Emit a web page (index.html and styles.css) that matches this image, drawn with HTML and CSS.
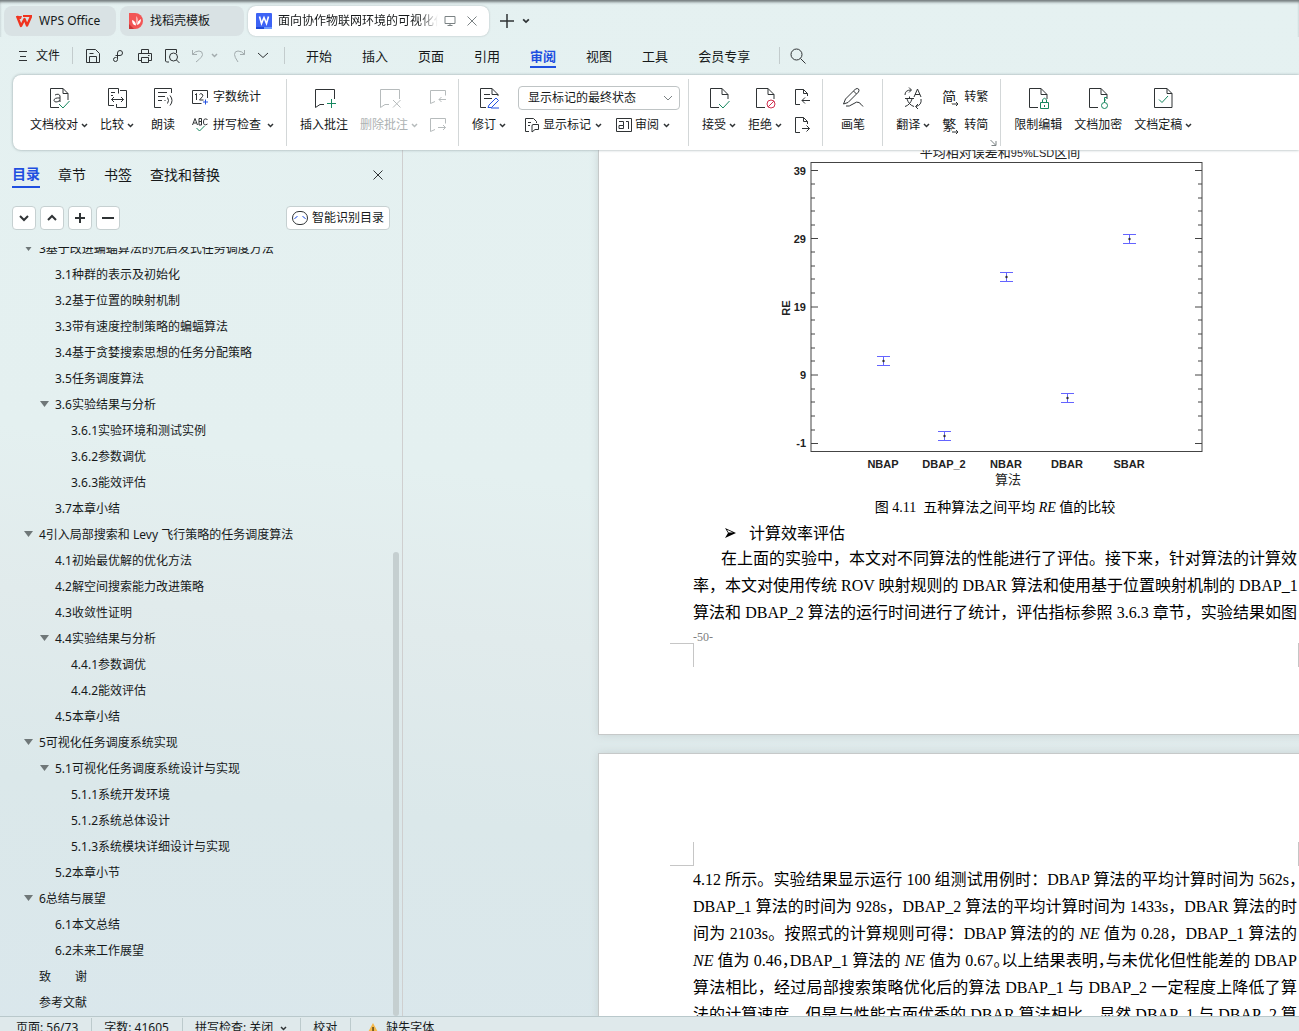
FILE: index.html
```
<!DOCTYPE html>
<html lang="zh-CN">
<head>
    <meta charset="UTF-8">
    <meta name="viewport" content="width=device-width, initial-scale=1.0">
    <title>WPS Office</title>
    <link rel="stylesheet" href="styles.css">
</head>
<body>
    <!-- Shared icon shapes -->
    <svg class="defs" width="0" height="0">
        <symbol id="chev" viewBox="0 0 7 5"><path d="M1 1l2.500 2.500L6 1" stroke-width="1.500"/></symbol>
        <symbol id="page" viewBox="0 0 24 24"><path d="M12 21.500H3.500V2.500H15l6 6V13M15 2.500v6h6"/></symbol>
        <symbol id="bubble" viewBox="0 0 24 24"><path d="M12 18.500H8l-4.500 3V3.500h19V13"/></symbol>
        <symbol id="cross" viewBox="0 0 12 12"><path d="M1.500 1.500l9 9M10.500 1.500l-9 9"/></symbol>
    </svg>

    <header class="titlebar">
        <button class="tab" type="button">
            <svg width="18" height="16" viewBox="0 0 18 16"><path d="M1 3h6l-1 3H3z" fill="#f43a2a"/><path d="M2 3l4 10 3.500-7 2.500 6.500L16 3.500" fill="none" stroke="#f0341f" stroke-width="2.400" stroke-linejoin="round"/><path d="M8 3h9" stroke="#f0341f" stroke-width="2"/></svg>
            <span>WPS Office</span>
        </button>
        <button class="tab tab-store" type="button">
            <svg width="16" height="16" viewBox="0 0 16 16"><path d="M1 0h6a8 8 0 010 16H1z" fill="#f25555"/><path d="M1 11l5 5H1z" fill="#c93636"/><path d="M4 7q4 1 4 5.500Q4 12 4 7zM8.500 12V3q2 3 0 9zM9 12q0-4 4-6 0 5-4 6z" fill="#fff"/></svg>
            <span>找稻壳模板</span>
        </button>
        <div class="tab tab-active">
            <svg width="16" height="16" viewBox="0 0 16 16"><rect width="16" height="16" rx="1" fill="#3d63f5"/><path d="M0 14h8v2H0z" fill="#1d49d8"/><path d="M8 14h8v2H8z" fill="#6e9bff"/><path d="M3.500 3.500l2 7L8 4.500l2.500 6 2-7" fill="none" stroke="#fff" stroke-width="1.600"/></svg>
            <span class="tab-title">面向协作物联网环境的可视化任务</span>
            <svg class="line muted" width="12" height="12" viewBox="0 0 12 12"><path d="M1 1.500h10v7H1zM6 8.500v2M3.500 10.500h5"/></svg>
            <button class="icon-btn tab-close" type="button" aria-label="关闭"><svg class="line muted" width="12" height="12"><use href="#cross"/></svg></button>
        </div>
        <button class="icon-btn" type="button" aria-label="新建"><svg class="line" width="14" height="14" viewBox="0 0 14 14"><path d="M7 0v14M0 7h14" stroke-width="1.500"/></svg></button>
        <button class="icon-btn tab-more" type="button" aria-label="更多标签"><svg class="line" width="8" height="6"><use href="#chev"/></svg></button>
    </header>

    <nav class="menubar">
        <button class="file-btn" type="button">
            <svg class="line" width="10" height="12" viewBox="0 0 10 12"><path d="M1 1.500h8M2 6.500h6M1 10.500h8"/></svg>
            <span>文件</span>
        </button>
        <span class="bar"></span>
        <div class="quick">
            <button class="icon-btn" type="button" aria-label="保存"><svg class="line" width="16" height="16" viewBox="0 0 16 16"><path d="M1.500 1.500h9l4 4v9h-13zM4.500 14V8.500h7V14M4.500 5.500h4"/></svg></button>
            <button class="icon-btn" type="button" aria-label="输出"><svg class="line" width="14" height="14" viewBox="0 0 14 14"><path d="M4.500 8.500h-1a2 2 0 102 2V4a2.500 2.500 0 115 0 2.500 2.500 0 01-2.500 2.500H3.500"/></svg></button>
            <button class="icon-btn" type="button" aria-label="打印"><svg class="line" width="16" height="16" viewBox="0 0 16 16"><path d="M4.500 5V1.500h7V5M4 12.500H1.500v-7h13v7H12M4.500 9.500h7v5h-7zM11 7.500h1.500"/></svg></button>
            <button class="icon-btn" type="button" aria-label="打印预览"><svg class="line" width="16" height="16" viewBox="0 0 16 16"><path d="M5 14H2.500L1.500 13V1.500h11V5M12.500 12l3 3"/><circle cx="9.500" cy="9" r="4"/></svg></button>
            <button class="icon-btn faded" type="button" aria-label="撤销"><svg class="line" width="13" height="14" viewBox="0 0 13 14"><path d="M1.500 1v4.500H6M1.500 5.500Q4 2 8 2a3.500 3.500 0 013.500 3.500Q11.500 8 5 13"/></svg></button>
            <button class="icon-btn faded" type="button" aria-label="撤销列表"><svg class="line" width="7" height="5"><use href="#chev"/></svg></button>
            <button class="icon-btn faded" type="button" aria-label="恢复"><svg class="line" width="13" height="14" viewBox="0 0 13 14"><path d="M11.500 1v4.500H7M11.500 5.500Q9 2 5 2a3.500 3.500 0 00-3.500 3.500Q1.500 8 5 13"/></svg></button>
            <button class="icon-btn" type="button" aria-label="自定义"><svg class="line" width="12" height="7" viewBox="0 0 12 7"><path d="M1 1l5 4.500L11 1"/></svg></button>
        </div>
        <span class="bar"></span>
        <div class="menus">
            <button type="button">开始</button>
            <button type="button">插入</button>
            <button type="button">页面</button>
            <button type="button">引用</button>
            <button type="button" class="current">审阅</button>
            <button type="button">视图</button>
            <button type="button">工具</button>
            <button type="button">会员专享</button>
        </div>
        <span class="bar"></span>
        <button class="icon-btn search" type="button" aria-label="搜索"><svg class="line" width="16" height="16" viewBox="0 0 16 16"><circle cx="6.500" cy="6.500" r="5.500"/><path d="M10.500 10.500l5 5"/></svg></button>
    </nav>

    <section class="ribbon">
        <div class="group">
            <button class="big" type="button">
                <svg class="line" width="24" height="24" viewBox="0 0 24 24"><path d="M12 21.500H3.500V2.500H16l5 5V14M16 2.500v5h5"/><path d="M8 9q4-2 5 1v6M13 12q-6-.5-6 2.500 1 3 6 0" /><path class="green" d="M12 18l4 4 6.500-7" /></svg>
                <span>文档校对<svg class="line" width="7" height="5"><use href="#chev"/></svg></span>
            </button>
            <button class="big" type="button">
                <svg class="line" width="24" height="24" viewBox="0 0 24 24"><path d="M9 19.500H3.500v-17h10v5M6 6.500h4M6 9.500h2M15 4.500h6.500v17h-10V18M6.500 13.500h12M9 11l-2.500 2.500L9 16M16 11l2.500 2.500L16 16"/></svg>
                <span>比较<svg class="line" width="7" height="5"><use href="#chev"/></svg></span>
            </button>
            <button class="big" type="button">
                <svg class="line" width="24" height="24" viewBox="0 0 24 24"><path d="M10 21.500H3.500V2.500h17V7M7 6.500h9M7 10.500h7M7 14.500h4M14 14v1M16.500 11.500q2 3 0 6M19 9.500q4 5 0 10"/></svg>
                <span>朗读</span>
            </button>
            <div class="stack">
                <button class="small" type="button">
                    <svg class="line" width="16" height="16" viewBox="0 0 16 16"><path d="M9.500 14.500H.5v-13h15V9M3 6l1.500-1.500V11M7.500 5.500q1-1.500 2.500-.5t.5 2.500l-3 3.500h4"/><path class="blue" d="M13.500 10.500v5M11 13h5"/></svg>
                    <span>字数统计</span>
                </button>
                <button class="small" type="button">
                    <svg class="line" width="16" height="16" viewBox="0 0 16 16"><path d="M.5 8L3 1.500 5.500 8M1.500 6h3M7 1.500V8h2.500V1.500H7M7 4.500h2.500M15.500 2.500q-4-2-4 2.500t4 2"/><path class="green" d="M4.500 11l3 3 5-5"/></svg>
                    <span>拼写检查</span><svg class="line" width="7" height="5"><use href="#chev"/></svg>
                </button>
            </div>
        </div>
        <div class="group">
            <button class="big" type="button">
                <svg class="line" width="24" height="24"><use href="#bubble"/><path class="green" d="M19.500 13v9M15 17.500h9"/></svg>
                <span>插入批注</span>
            </button>
            <button class="big" type="button" disabled>
                <svg class="line" width="24" height="24"><use href="#bubble"/><path d="M16 14l7.500 7.500M23.500 14L16 21.500"/></svg>
                <span>删除批注<svg class="line" width="7" height="5"><use href="#chev"/></svg></span>
            </button>
            <div class="stack">
                <button class="small" type="button" aria-label="上一条" disabled><svg class="line" width="16" height="16" viewBox="0 0 16 16"><path d="M5 12.500l-4.500 2v-13h15v5M16 10.500H9M11.500 8L9 10.500l2.500 2.500"/></svg></button>
                <button class="small" type="button" aria-label="下一条" disabled><svg class="line" width="16" height="16" viewBox="0 0 16 16"><path d="M5 12.500l-4.500 2v-13h15v5M8 10.500h7.500M13 8l2.500 2.500L13 13"/></svg></button>
            </div>
        </div>
        <div class="group group-tight">
            <button class="big" type="button">
                <svg class="line" width="24" height="24" viewBox="0 0 24 24"><path d="M9 21.500H3.500V2.500H15l6 6V10M15 2.500v6h6M7 8.500h6M7 12.500h8"/><path class="blue" d="M12 19l7-7 2.500 2.500-7 7H11zM14 22h8"/></svg>
                <span>修订<svg class="line" width="7" height="5"><use href="#chev"/></svg></span>
            </button>
            <div class="stack">
                <div class="picker">
                    <select aria-label="标记显示状态"><option>显示标记的最终状态</option></select>
                    <svg class="line muted" width="10" height="7" viewBox="0 0 10 7"><path d="M1 1l4 4 4-4"/></svg>
                </div>
                <div class="pair">
                    <button class="small" type="button">
                        <svg class="line" width="16" height="16" viewBox="0 0 16 16"><path d="M5 14.500H1.500v-13h8l3 3V6M4 5.500h3M4 8.500h2M8 9q0-1.500 1-1.500h5.500v5H11L8 15z"/></svg>
                        <span>显示标记</span><svg class="line" width="7" height="5"><use href="#chev"/></svg>
                    </button>
                    <button class="small" type="button">
                        <svg class="line" width="16" height="16" viewBox="0 0 16 16"><path d="M.5 1.500h15v13H.5zM3 11.500V8.500h4.500V4.500H3M7.500 8.500v3H3M10 4.500h2.500V12"/></svg>
                        <span>审阅</span><svg class="line" width="7" height="5"><use href="#chev"/></svg>
                    </button>
                </div>
            </div>
        </div>
        <div class="group">
            <button class="big" type="button">
                <svg class="line" width="24" height="24"><use href="#page"/><path class="green" d="M12 18l4 4 6.500-7"/></svg>
                <span>接受<svg class="line" width="7" height="5"><use href="#chev"/></svg></span>
            </button>
            <button class="big" type="button">
                <svg class="line" width="24" height="24"><use href="#page"/><g class="red"><circle class="red" cx="18" cy="18" r="4"/><path class="red" d="M15 21l6-6"/></g></svg>
                <span>拒绝<svg class="line" width="7" height="5"><use href="#chev"/></svg></span>
            </button>
            <div class="stack">
                <button class="small" type="button" aria-label="上一处"><svg class="line" width="16" height="16" viewBox="0 0 16 16"><path d="M6 15.500H1.500V.5h8l4 4V7M9.500.5v4h4M16 11.500H8M11 8.500l-3 3 3 3"/></svg></button>
                <button class="small" type="button" aria-label="下一处"><svg class="line" width="16" height="16" viewBox="0 0 16 16"><path d="M6 15.500H1.500V.5h8l4 4V7M9.500.5v4h4M8 11.500h7.500M12.500 8.500l3 3-3 3"/></svg></button>
            </div>
        </div>
        <div class="group">
            <button class="big" type="button">
                <svg class="line" width="24" height="24" viewBox="0 0 24 24"><path d="M2.500 18l2-5L14.500 3q2-1 3 0t0 3L7 16.500zM12.500 5l3 3M5 20q3 1 7-2t6-1.500 4 4"/></svg>
                <span>画笔</span>
            </button>
        </div>
        <div class="group">
            <button class="big" type="button">
                <svg class="line" width="24" height="24" viewBox="0 0 24 24"><path d="M4 9q0-5 6-5M8 1.500L10.500 4 8 6.500M13 11l3.500-8L20 11M14 8.500h5M4 12.500h9M8.500 10.500v2M6 13q2 6 7 7.500M11 13q-2 6-7 7.500M20 13q1 6-5 7.500M17 18l-2.500 2.500L17 23"/></svg>
                <span>翻译<svg class="line" width="7" height="5"><use href="#chev"/></svg></span>
            </button>
            <div class="stack">
                <button class="small" type="button">
                    <span class="glyph">简<svg class="line" width="7" height="6" viewBox="0 0 7 6"><path d="M0 3h6M4 1l2 2-2 2"/></svg></span>
                    <span>转繁</span>
                </button>
                <button class="small" type="button">
                    <span class="glyph">繁<svg class="line" width="7" height="6" viewBox="0 0 7 6"><path d="M0 3h6M4 1l2 2-2 2"/></svg></span>
                    <span>转简</span>
                </button>
            </div>
            <svg class="line muted launcher" width="7" height="7" viewBox="0 0 7 7"><path d="M.5 1l5 5M6 2v4.500H1.500"/></svg>
        </div>
        <div class="group">
            <button class="big" type="button">
                <svg class="line" width="24" height="24"><use href="#page"/><rect x="14" y="15" width="9" height="9" fill="#fff" stroke="none"/><path class="green" d="M14.500 16.500h8v6h-8zM16.500 16v-2q2-3.500 4 0v2M18.500 19v2"/></svg>
                <span>限制编辑</span>
            </button>
            <button class="big" type="button">
                <svg class="line" width="24" height="24"><use href="#page"/><g class="green"><circle cx="18.500" cy="19.500" r="3"/><path d="M18.500 16.500v-5H21M18.500 14H20"/></g></svg>
                <span>文档加密</span>
            </button>
            <button class="big" type="button">
                <svg class="line" width="24" height="24" viewBox="0 0 24 24"><path d="M3.500 2.500H16l5 5v14H3.500zM16 2.500v5h5"/><path class="green" d="M8 13.500l3 3 6-6.500"/></svg>
                <span>文档定稿<svg class="line" width="7" height="5"><use href="#chev"/></svg></span>
            </button>
        </div>
    </section>

    <main class="workspace">
        <aside class="sidebar">
            <div class="side-tabs">
                <button type="button" class="current">目录</button>
                <button type="button">章节</button>
                <button type="button">书签</button>
                <button type="button">查找和替换</button>
                <button class="icon-btn side-close" type="button" aria-label="关闭"><svg class="line" width="12" height="12"><use href="#cross"/></svg></button>
            </div>
            <div class="side-tools">
                <button type="button" aria-label="展开"><svg class="line" width="10" height="10" viewBox="0 0 10 10"><path d="M1 3l4 4 4-4" stroke-width="2"/></svg></button>
                <button type="button" aria-label="收起"><svg class="line" width="10" height="10" viewBox="0 0 10 10"><path d="M1 7l4-4 4 4" stroke-width="2"/></svg></button>
                <button type="button" aria-label="提升"><svg class="line" width="10" height="10" viewBox="0 0 10 10"><path d="M5 0v10M0 5h10" stroke-width="2"/></svg></button>
                <button type="button" aria-label="降低"><svg class="line" width="12" height="10" viewBox="0 0 12 10"><path d="M0 5h12" stroke-width="2"/></svg></button>
                <button type="button" class="smart">
                    <svg class="line" width="16" height="14" viewBox="0 0 16 14"><rect x=".5" y=".5" width="15" height="13" rx="6.500"/><path class="blue" d="M2.500 8q1-2 3-2.500M13.500 8q-1-2-3-2.500"/></svg>
                    <span>智能识别目录</span>
                </button>
            </div>
            <div class="outline">
                <ul>
                    <li class="level-1 open">3基于改进蝙蝠算法的元启发式任务调度方法</li>
                    <li class="level-2">3.1种群的表示及初始化</li>
                    <li class="level-2">3.2基于位置的映射机制</li>
                    <li class="level-2">3.3带有速度控制策略的蝙蝠算法</li>
                    <li class="level-2">3.4基于贪婪搜索思想的任务分配策略</li>
                    <li class="level-2">3.5任务调度算法</li>
                    <li class="level-2 open">3.6实验结果与分析</li>
                    <li class="level-3">3.6.1实验环境和测试实例</li>
                    <li class="level-3">3.6.2参数调优</li>
                    <li class="level-3">3.6.3能效评估</li>
                    <li class="level-2">3.7本章小结</li>
                    <li class="level-1 open">4引入局部搜索和 Levy 飞行策略的任务调度算法</li>
                    <li class="level-2">4.1初始最优解的优化方法</li>
                    <li class="level-2">4.2解空间搜索能力改进策略</li>
                    <li class="level-2">4.3收敛性证明</li>
                    <li class="level-2 open">4.4实验结果与分析</li>
                    <li class="level-3">4.4.1参数调优</li>
                    <li class="level-3">4.4.2能效评估</li>
                    <li class="level-2">4.5本章小结</li>
                    <li class="level-1 open">5可视化任务调度系统实现</li>
                    <li class="level-2 open">5.1可视化任务调度系统设计与实现</li>
                    <li class="level-3">5.1.1系统开发环境</li>
                    <li class="level-3">5.1.2系统总体设计</li>
                    <li class="level-3">5.1.3系统模块详细设计与实现</li>
                    <li class="level-2">5.2本章小节</li>
                    <li class="level-1 open">6总结与展望</li>
                    <li class="level-2">6.1本文总结</li>
                    <li class="level-2">6.2未来工作展望</li>
                    <li class="level-1">致　　谢</li>
                    <li class="level-1">参考文献</li>
                </ul>
            </div>
            <div class="scroll-thumb"></div>
        </aside>

        <div class="canvas">
            <article class="sheet">
                <svg class="chart" width="604" height="340" viewBox="0 0 604 340">
                    <text class="chart-cn" x="307" y="7">平均相对误差和<tspan class="chart-latin">95%LSD</tspan>区间</text>
                    <rect x="118" y="12.500" width="391" height="289" fill="none" stroke="#444"/>
                    <path class="tick" d="M118 20.500h7M118 88.500h7M118 157h7M118 225h7M118 293.500h7M509 20.500h-7M509 88.500h-7M509 157h-7M509 225h-7M509 293.500h-7"/>
                    <path class="tick" d="M118 34h4M118 48h4M118 61h4M118 75h4M118 102h4M118 116h4M118 129h4M118 143h4M118 170h4M118 184h4M118 198h4M118 211h4M118 239h4M118 252h4M118 266h4M118 280h4"/>
                    <path class="tick" d="M509 34h-4M509 48h-4M509 61h-4M509 75h-4M509 102h-4M509 116h-4M509 129h-4M509 143h-4M509 170h-4M509 184h-4M509 198h-4M509 211h-4M509 239h-4M509 252h-4M509 266h-4M509 280h-4"/>
                    <g class="chart-num">
                        <text x="113" y="25">39</text>
                        <text x="113" y="93">29</text>
                        <text x="113" y="161">19</text>
                        <text x="113" y="229">9</text>
                        <text x="113" y="297">-1</text>
                    </g>
                    <g class="chart-cat">
                        <text transform="translate(97 158) rotate(-90)">RE</text>
                        <text x="190" y="318">NBAP</text>
                        <text x="251" y="318">DBAP_2</text>
                        <text x="313" y="318">NBAR</text>
                        <text x="374" y="318">DBAR</text>
                        <text x="436" y="318">SBAR</text>
                    </g>
                    <text class="chart-cn" x="315" y="334">算法</text>
                    <g class="errorbar">
                        <path d="M184 206.500h13M184 215.500h13M190.500 206v9"/>
                        <path d="M245 281.500h13M245 290.500h13M251.500 281v9"/>
                        <path d="M307 122.500h13M307 131.500h13M313.500 122v9"/>
                        <path d="M368 243.500h13M368 252.500h13M374.500 243v9"/>
                        <path d="M430 84.500h13M430 93.500h13M436.500 84v9"/>
                    </g>
                    <g fill="#333">
                        <circle cx="190.500" cy="211" r="1.200"/>
                        <circle cx="251.500" cy="286" r="1.200"/>
                        <circle cx="313.500" cy="127" r="1.200"/>
                        <circle cx="374.500" cy="248" r="1.200"/>
                        <circle cx="436.500" cy="89" r="1.200"/>
                    </g>
                </svg>
                <p class="caption">图 4.11&nbsp; 五种算法之间平均 <i>RE</i> 值的比较</p>
                <p class="bullet"><svg width="11" height="10" viewBox="0 0 11 10"><path d="M0 0l11 5L0 10l3-5z"/><path d="M2 1.800L8 4.600H3.500z" fill="#fff"/></svg>计算效率评估</p>
                <div class="text">
                    <p class="indent">在上面的实验中，本文对不同算法的性能进行了评估。接下来，针对算法的计算效</p>
                    <p>率，本文对使用传统 ROV 映射规则的 DBAR 算法和使用基于位置映射机制的 DBAP_1</p>
                    <p>算法和 DBAP_2 算法的运行时间进行了统计，评估指标参照 3.6.3 章节，实验结果如图</p>
                </div>
                <div class="page-no">-50-</div>
                <div class="marks marks-bottom"><i></i><i></i></div>
            </article>
            <article class="sheet sheet-next">
                <div class="marks marks-top"><i></i><i></i></div>
                <div class="text">
                    <p>4.12 所示。实验结果显示运行 100 组测试用例时：DBAP 算法的平均计算时间为 562s<span class="half">，</span></p>
                    <p>DBAP_1 算法的时间为 928s，DBAP_2 算法的平均计算时间为 1433s，DBAR 算法的时</p>
                    <p>间为 2103s。按照式的计算规则可得：DBAP 算法的的 <i>NE</i> 值为 0.28，DBAP_1 算法的</p>
                    <p><i>NE</i> 值为 0.46<span class="half">，</span>DBAP_1 算法的 <i>NE</i> 值为 0.67<span class="half">。</span>以上结果表明<span class="half">，</span>与未优化但性能差的 DBAP</p>
                    <p>算法相比，经过局部搜索策略优化后的算法 DBAP_1 与 DBAP_2 一定程度上降低了算</p>
                    <p>法的计算速度，但是与性能方面优秀的 DBAR 算法相比，显然 DBAP_1 与 DBAP_2 算</p>
                </div>
            </article>
        </div>
    </main>

    <footer class="statusbar">
        <span>页面: 56/73</span>
        <span>字数: 41605</span>
        <button type="button">拼写检查: 关闭<svg class="line" width="7" height="5"><use href="#chev"/></svg></button>
        <button type="button">校对</button>
        <button type="button" class="warn"><svg width="12" height="11" viewBox="0 0 12 11"><path d="M6 0l6 11H0z" fill="#f5b84a"/><path d="M5.300 4h1.500v5H5.300z" fill="#5c4310"/></svg>缺失字体</button>
    </footer>
</body>
</html>
```
FILE: styles.css
```
* {
    box-sizing: border-box;
}

body {
    margin: 0;
    height: 100vh;
    display: flex;
    flex-direction: column;
    overflow: hidden;
    font-family: "Noto Sans", "Noto Sans CJK SC", sans-serif;
    font-size: 12px;
    line-height: 20px;
    color: #16191a;
    background: linear-gradient(186deg, #e5f1f1 0%, #e4f0f0 48%, #e1ebec 62%, #dbe8ea 78%, #dae7ec 100%);
}

button, select {
    font: inherit;
    color: inherit;
    background: none;
    border: none;
    padding: 0;
    white-space: nowrap;
}

p, ul {
    margin: 0;
    padding: 0;
}

svg {
    flex: none;
}

.defs {
    position: absolute;
}

/* Line icons */
.line {
    fill: none;
    stroke: #2f3335;
}

.line .green { stroke: #16875f; }
.line .blue { stroke: #2251e0; }
.line .red { stroke: #d0304f; }
.muted { stroke: #7b8284; }

.icon-btn {
    display: flex;
    align-items: center;
    justify-content: center;
}

.faded .line {
    stroke: #a3acae;
}

.bar {
    width: 1px;
    height: 17px;
    background: #c3cccd;
}

/* Title bar */
.titlebar {
    display: flex;
    align-items: center;
    gap: 4px;
    height: 37px;
    padding: 5px 4px 0;
    box-shadow: inset 0 3px 3px -1px #6f7779;
}

.titlebar > .icon-btn {
    margin-left: 7px;
}

.titlebar > .tab-more {
    margin-left: 4px;
}

.tab {
    display: flex;
    align-items: center;
    gap: 6px;
    width: 112px;
    height: 30px;
    padding: 0 11px;
    border-radius: 8px;
    background: #d9e2e4;
}

.tab-store {
    width: 124px;
    padding: 0 8px;
}

.tab-active {
    width: 241px;
    padding: 0 8px;
    background: #fff;
    box-shadow: 0 0 2px #a9b4b6;
}

.tab-title {
    width: 160px;
    overflow: hidden;
    white-space: nowrap;
    -webkit-mask-image: linear-gradient(90deg, #000 88%, transparent);
    mask-image: linear-gradient(90deg, #000 88%, transparent);
}

.tab-close {
    margin-left: 4px;
}

/* Menu bar */
.menubar {
    display: flex;
    align-items: center;
    height: 37px;
    padding-left: 18px;
}

.file-btn {
    display: flex;
    align-items: center;
    gap: 8px;
    margin-right: 12px;
}

.quick {
    display: flex;
    align-items: center;
    gap: 11px;
    padding: 0 15px 0 12px;
}

.quick .faded + .faded {
    margin-left: -4px;
}

.quick .faded + .faded + .faded {
    margin-left: 4px;
}

.menus {
    display: flex;
    gap: 30px;
    padding: 0 29px 0 21px;
    font-size: 13px;
}

.menus button {
    height: 24px;
}

.current {
    color: #1f4fe0;
    font-weight: bold;
    border-bottom: 2px solid #1f4fe0;
}

.menus .current {
    padding-top: 2px;
}

.search {
    margin-left: 10px;
}

/* Ribbon */
.ribbon {
    display: flex;
    position: relative;
    z-index: 1;
    height: 75px;
    margin: 1px 0 0 13px;
    padding: 4px 0 4px 4px;
    background: #fff;
    border-radius: 8px 0 0 8px;
    box-shadow: 0 0 3px #93a3a5;
}

.group {
    position: relative;
    display: flex;
    gap: 12px;
    padding: 7px 12px 0 13px;
    border-right: 1px solid #d3d7d8;
}

.group-tight {
    padding-right: 8px;
}

.group:last-child {
    border-right: none;
}

.big {
    display: flex;
    flex-direction: column;
    align-items: center;
    gap: 5px;
    min-width: 34px;
}

.big span {
    display: flex;
    align-items: center;
    gap: 3px;
}

.stack {
    display: flex;
    flex-direction: column;
    justify-content: space-between;
    height: 50px;
}

.small {
    display: flex;
    align-items: center;
    gap: 5px;
    height: 22px;
}

.small span + svg {
    margin-left: 1px;
}

button:disabled {
    color: #adb2b3;
}

button:disabled .line {
    stroke: #b6bbbc;
}

.picker {
    position: relative;
}

.picker select {
    width: 162px;
    height: 24px;
    padding: 0 9px;
    border: 1px solid #bfc4c5;
    border-radius: 4px;
    appearance: none;
}

.picker svg {
    position: absolute;
    right: 7px;
    top: 9px;
}

.pair {
    display: flex;
    gap: 14px;
    padding-left: 6px;
}

.pair .small {
    gap: 3px;
}

.glyph {
    position: relative;
    width: 17px;
    font-size: 14px;
    text-align: left;
}

.glyph svg {
    position: absolute;
    right: 0;
    bottom: 0;
    background: #fff;
}

.launcher {
    position: absolute;
    right: 3px;
    bottom: 0;
}

/* Sidebar */
.workspace {
    flex: 1;
    display: flex;
    min-height: 0;
}

.sidebar {
    position: relative;
    flex: none;
    display: flex;
    flex-direction: column;
    width: 403px;
    border-right: 1px solid #cfcfcf;
}

.side-tabs {
    display: flex;
    gap: 18px;
    padding: 11px 18px 0 12px;
    font-size: 14px;
}

.side-tabs button {
    height: 27px;
}

.side-close {
    margin-left: auto;
}

.side-tools {
    display: flex;
    gap: 4px;
    padding: 18px 12px 17px;
}

.side-tools button {
    display: flex;
    align-items: center;
    justify-content: center;
    gap: 4px;
    min-width: 24px;
    height: 24px;
    background: #fff;
    border: 1px solid #c6d0d1;
    border-radius: 4px;
}

.side-tools .smart {
    margin-left: auto;
    padding: 0 5px;
}

.outline {
    flex: 1;
    display: flex;
    flex-direction: column;
    justify-content: flex-end;
    min-height: 0;
    overflow: hidden;
}

.outline ul {
    list-style: none;
}

.outline li {
    line-height: 26px;
    white-space: pre;
}

.outline li::before {
    content: "";
    display: inline-block;
    width: 9px;
    height: 6px;
    margin: 0 6px 2px 0;
}

.outline .open::before {
    background: #6f7778;
    clip-path: polygon(0 0, 100% 0, 50% 100%);
}

.level-1 { padding-left: 24px; }
.level-2 { padding-left: 40px; }
.level-3 { padding-left: 56px; }

.scroll-thumb {
    position: absolute;
    right: 3px;
    bottom: 0;
    width: 6px;
    height: 464px;
    border-radius: 3px;
    background: #c5cfd0;
}

/* Document */
.canvas {
    flex: 1;
    min-width: 0;
    overflow: hidden;
    padding-left: 195px;
}

.sheet {
    width: 796px;
    padding: 0 94px;
    background: #fff;
    border: 1px solid #c6c9c9;
    border-top: none;
    box-shadow: 0 0 8px #c9d3d4;
    font-family: "Liberation Serif", "Noto Sans CJK SC", serif;
    font-size: 16px;
    line-height: 27px;
    color: #000;
}

.sheet-next {
    margin-top: 18px;
    border-top: 1px solid #c6c9c9;
    height: 1123px;
}

.chart {
    display: block;
}

.chart text {
    font-family: "Liberation Sans", "Noto Sans CJK SC", sans-serif;
    font-size: 11px;
    font-weight: bold;
    fill: #222;
}

.chart .chart-cn {
    font-size: 13px;
    font-weight: normal;
    text-anchor: middle;
}

.chart-latin {
    font-size: 11px;
}

.chart-num { text-anchor: end; }
.chart-cat { text-anchor: middle; }
.tick { stroke: #444; }
.errorbar { fill: none; stroke: #6464ff; }

.caption {
    font-size: 14px;
    text-align: center;
    width: 604px;
    padding-top: 4px;
}

.bullet {
    display: flex;
    align-items: center;
    gap: 13px;
    height: 24px;
    padding-left: 32px;
}

.text p {
    width: 604px;
    white-space: nowrap;
    text-align: justify;
    text-align-last: justify;
}

.text .indent {
    padding-left: 28px;
}

.half {
    font-feature-settings: "halt";
}

.page-no {
    font-size: 12px;
    line-height: 18px;
    padding-top: 2px;
    height: 17px;
    color: #808080;
}

/* Margin corner marks */
.marks {
    display: flex;
    justify-content: space-between;
    margin: 0 -23px;
}

.marks i {
    width: 24px;
    height: 24px;
    border: 0 solid #c6c6c6;
}

.marks i:first-child { border-right-width: 1px; }
.marks i:last-child { border-left-width: 1px; }

.marks-bottom { padding-bottom: 67px; }
.marks-bottom i { border-top-width: 1px; }
.marks-top { padding-top: 88px; }
.marks-top i { border-bottom-width: 1px; }

/* Status bar */
.statusbar {
    flex: none;
    display: flex;
    height: 15px;
    padding: 1px 4px 0;
    overflow: hidden;
    border-top: 1px solid #b9c8cb;
    background: #dfe9eb;
    white-space: nowrap;
}

.statusbar > * {
    flex: none;
    display: flex;
    align-items: center;
    gap: 7px;
    height: 20px;
    padding: 0 13px 0 12px;
    border-right: 1px solid #bccacc;
}

.statusbar > .warn {
    padding-left: 16px;
    border-right: none;
}
```
